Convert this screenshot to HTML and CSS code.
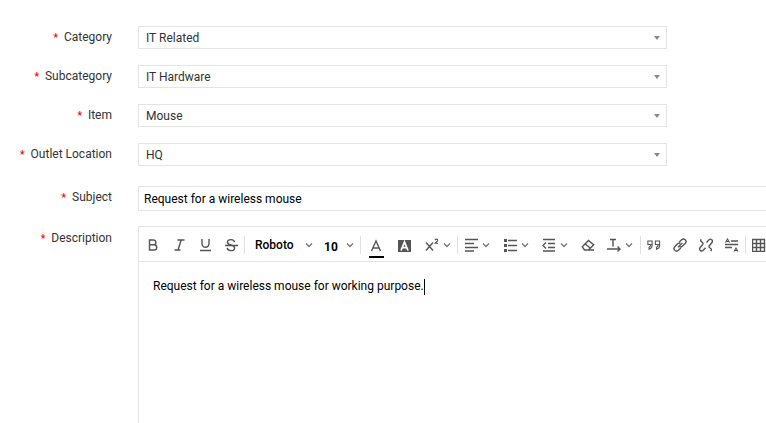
FILE: index.html
```html
<!DOCTYPE HTML>
<html lang="en-US">
<head>
	<meta charset="UTF-8" />
	<title>New request</title>
	<link rel="stylesheet" href="styles.css">
</head>
<body>

	<svg class="sprite" aria-hidden="true">
		<symbol id="chevron" viewBox="0 0 8 8"><path d="M1 2.5l3 3 3-3" /></symbol>
	</svg>

	<form class="form">
		<div class="row">
			<label class="label" for="category">Category</label>
			<div class="pick">
				<select id="category"><option>IT Related</option></select>
			</div>
		</div>
		<div class="row">
			<label class="label" for="subcategory">Subcategory</label>
			<div class="pick">
				<select id="subcategory"><option>IT Hardware</option></select>
			</div>
		</div>
		<div class="row">
			<label class="label" for="item">Item</label>
			<div class="pick">
				<select id="item"><option>Mouse</option></select>
			</div>
		</div>
		<div class="row">
			<label class="label" for="outlet">Outlet Location</label>
			<div class="pick">
				<select id="outlet"><option>HQ</option></select>
			</div>
		</div>
		<div class="row subject">
			<label class="label" for="subject">Subject</label>
			<input class="text" id="subject" type="text" value="Request for a wireless mouse" />
		</div>
		<div class="row description">
			<span class="label" id="description">Description</span>
			<div class="editor">
				<div class="toolbar" role="toolbar" aria-label="Formatting">
					<div class="group">
						<button type="button" aria-label="Bold"><svg viewBox="0 0 14 14"><path d="M3.500 2h4a2.400 2.400 0 0 1 0 4.800h-4zM3.500 6.800h4.600a2.600 2.600 0 0 1 0 5.200H3.500z" /></svg></button>
						<button type="button" aria-label="Italic"><svg viewBox="0 0 14 14"><path d="M5.500 2h7M2.500 12h6M9.200 2l-3.200 10" /></svg></button>
						<button type="button" aria-label="Underline"><svg viewBox="0 0 14 14"><path d="M4 1v4.700a3.500 3.500 0 0 0 7 0V1M2 12.500h11" /></svg></button>
						<button type="button" aria-label="Strikethrough"><svg viewBox="0 0 14 14"><path d="M10.500 4C10.200 2.500 9 1.600 7 1.600S3.500 2.600 3.500 4.200C3.500 5.600 4.600 6.400 7 7s3.600 1.500 3.600 2.900c0 1.700-1.400 2.700-3.600 2.700s-3.600-1-3.800-2.700M1 7.500h13" /></svg></button>
					</div>
					<div class="group">
						<div class="font">
							<select aria-label="Font"><option>Roboto</option></select>
							<svg class="chevron"><use href="#chevron" /></svg>
						</div>
						<div class="size">
							<select aria-label="Font size"><option>10</option></select>
							<svg class="chevron"><use href="#chevron" /></svg>
						</div>
					</div>
					<div class="group">
						<button class="color" type="button" aria-label="Text color"><svg viewBox="0 0 14 14"><path d="M2.500 13L7 3l4.500 10M4 10h6" /></svg></button>
						<button type="button" aria-label="Background color"><svg viewBox="0 0 14 14"><path class="solid" d="M1 2h13v12H1z" /><path class="light" d="M4 12.500L7.500 4 11 12.500M5.200 9.700h4.600" /></svg></button>
						<button class="drop script" type="button" aria-label="Superscript"><svg viewBox="0 0 14 14"><path d="M1 4.500l7 8M8 4.500l-7 8" /><path class="thin" d="M10 2.200c.2-1.400 2.800-1.400 2.800.1C12.800 3.500 11 4 10 5.300h3.200" /></svg><svg class="chevron"><use href="#chevron" /></svg></button>
					</div>
					<div class="group">
						<button class="drop" type="button" aria-label="Align"><svg viewBox="0 0 14 14"><path d="M1 1.500h13M1 5.500h9M1 9.500h13M1 13h9" /></svg><svg class="chevron"><use href="#chevron" /></svg></button>
						<button class="drop" type="button" aria-label="List"><svg viewBox="0 0 14 14"><path d="M5 2.500h9M5 7.500h9M5 12.500h9" /><path class="solid" d="M1 1h3v3H1zM1 6h3v3H1zM1 11h3v3H1z" /></svg><svg class="chevron"><use href="#chevron" /></svg></button>
						<button class="drop" type="button" aria-label="Outdent"><svg viewBox="0 0 14 14"><path d="M1 1.500h12M6 5.500h7M6 9.500h7M1 13h12M4 4.500l-3 3 3 3" /></svg><svg class="chevron"><use href="#chevron" /></svg></button>
						<button type="button" aria-label="Clear formatting"><svg viewBox="0 0 14 14"><path d="M1.300 8.800l6.200-6.300 5.200 4.200-5.300 5.300H3.500zM4.200 6l5.300 4.300M6 12h7" /></svg></button>
						<button class="drop" type="button" aria-label="Text direction"><svg viewBox="0 0 14 14"><path d="M3 1.500h6M6 1.500v7M0 11h13M10.500 8.500L13 11l-2.500 2.500" /></svg><svg class="chevron"><use href="#chevron" /></svg></button>
					</div>
					<div class="group">
						<button type="button" aria-label="Quote"><svg class="quote" viewBox="0 0 14 14"><path d="M4.500 6.500H.9V3h4.200v4.500q0 2.600-3 3.700V9.300q1.400-.7 1.600-2.600M12 6.500H8.400V3h4.200v4.500q0 2.600-3 3.700V9.300q1.400-.7 1.600-2.600" /></svg></button>
						<button type="button" aria-label="Link"><svg viewBox="0 0 14 14"><path d="M5 9.200L9.300 5M6.200 4.200l2.400-2.400a2.500 2.500 0 0 1 3.600 3.600L9.300 8.300a2.300 2.300 0 0 1-2.600.4M7.800 10l-2.400 2.300a2.500 2.500 0 0 1-3.600-3.600l2.900-2.900a2.300 2.300 0 0 1 2.600-.4" /></svg></button>
						<button type="button" aria-label="Remove link"><svg viewBox="0 0 14 14"><path d="M7.500 4.500l2.300-2.600a2 2 0 0 1 3 2.800L10.500 7.500q-1.200 1.500.5 2.500l1 .8q.8.900-.3 2.200M6.500 9.800l-2.300 2.500a2 2 0 0 1-3-2.800L3.500 6.700q1.200-1.500-.5-2.500l-1-.8q-.8-.9.300-2.200" /></svg></button>
						<button type="button" aria-label="Line height"><svg viewBox="0 0 14 14"><path d="M6 3h7M0 6.500h13M0 9.500h7" /><path class="thin" d="M.5 4.500L2.500 1l2 3.500M1 3.500h3M9 13.500l2-3.500 2 3.500M9.500 12.500h3" /></svg></button>
					</div>
					<div class="group">
						<button type="button" aria-label="Table"><svg viewBox="0 0 14 14"><path d="M.5 1.500h12v12H.5zM.5 5.500h12M.5 9.500h12M4.500 1.500v12M8.500 1.500v12" /></svg></button>
					</div>
				</div>
				<div class="content" contenteditable="true" role="textbox" aria-multiline="true" aria-labelledby="description">Request for a wireless mouse for working purpose.<span class="caret"></span></div>
			</div>
		</div>
	</form>

</body>
</html>
```

FILE: styles.css
```css
* {
	box-sizing: border-box;
	margin: 0;
	padding: 0;
}
body {
	background-color: #fff;
	color: #333;
	font: 12px/16px Roboto, sans-serif;
	overflow: hidden;
}
.sprite {
	display: none;
}
.form {
	display: flex;
	flex-direction: column;
	gap: 16px;
	min-height: 100vh;
	padding-top: 26px;
}
.row {
	align-items: flex-start;
	display: flex;
	gap: 26px;
}
.label {
	flex: none;
	line-height: 22px;
	text-align: right;
	width: 112px;
}
.label:before {
	color: #f00;
	content: "*";
	font-size: 10px;
	font-weight: bold;
	margin-right: 6px;
}
select,
.text {
	appearance: none;
	background-color: transparent;
	border: 0;
	border-radius: 0;
	color: inherit;
	font: inherit;
	outline: 0;
}
.pick {
	flex: 0 1 529px;
	position: relative;
}
.pick select {
	border: 1px solid #e4e4e4;
	display: block;
	height: 23px;
	padding: 0 24px 0 7px;
	width: 100%;
}
.pick:after {
	border: 3px solid transparent;
	border-bottom: 0;
	border-top: 4px solid #888;
	content: "";
	pointer-events: none;
	position: absolute;
	right: 7px;
	top: 10px;
}
.subject {
	margin-top: 4px;
}
.text {
	border: 1px solid #e4e4e4;
	border-right: 0;
	color: #000;
	flex: 1;
	height: 25px;
	padding: 0 5px;
}
.description {
	flex: 1;
	margin-top: -1px;
}
.description .label {
	line-height: 24px;
}
.editor {
	align-self: stretch;
	border: 1px solid #e4e4e4;
	border-width: 1px 0 0 1px;
	color: #000;
	flex: 1;
	min-width: 0;
}
.toolbar {
	align-items: center;
	border-bottom: 1px solid #e4e4e4;
	display: flex;
	height: 35px;
	overflow: hidden;
	padding-top: 2px;
}
.group {
	align-items: center;
	display: flex;
	flex: none;
	height: 18px;
}
.group:first-child {
	padding-left: 1px;
}
.group + .group {
	border-left: 1px solid #e0e0e0;
}
button {
	align-items: center;
	background-color: transparent;
	border: 0;
	cursor: pointer;
	display: flex;
	height: 26px;
	justify-content: center;
	width: 26px;
}
svg {
	fill: none;
	flex: none;
	height: 14px;
	stroke: #555;
	stroke-width: 1.4;
	width: 14px;
}
.chevron {
	height: 8px;
	stroke: #777;
	width: 8px;
}
.solid {
	fill: #555;
	stroke: none;
}
.light {
	stroke: #fff;
	stroke-width: 1.8;
}
.thin,
.quote {
	stroke-width: 1.1;
}
.drop {
	gap: 4px;
	justify-content: flex-start;
	padding-left: 6px;
	width: 39px;
}
.script {
	padding-left: 8px;
	width: 40px;
}
.color {
	background: linear-gradient(#000, #000) center bottom / 15px 2px no-repeat;
	width: 30px;
}
.font,
.size {
	align-items: center;
	display: flex;
	font-weight: 500;
}
.font {
	padding: 0 6px 0 10px;
	width: 74px;
}
.size {
	font-weight: bold;
	padding: 4px 6px 0 5px;
	width: 41px;
}
.font select,
.size select {
	flex: 1;
	min-width: 0;
}
.size .chevron {
	margin-top: -4px;
}
.content {
	outline: 0;
	padding: 16px 14px;
}
.caret {
	background-color: #000;
	display: inline-block;
	height: 16px;
	vertical-align: middle;
	width: 1px;
}
```
